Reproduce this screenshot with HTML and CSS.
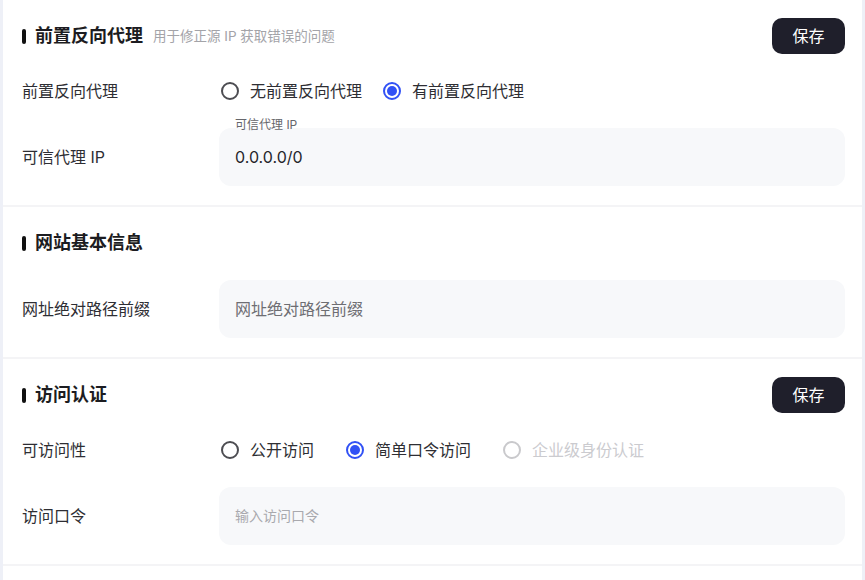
FILE: index.html
```html
<!DOCTYPE html>
<html lang="zh-CN">
<head>
<meta charset="utf-8">
<title>设置</title>
<link rel="stylesheet" href="styles.css">
</head>
<body>
<div class="panel">
  <section class="section">
    <div class="head">
      <div class="title"><span class="mark"></span><h2>前置反向代理</h2><span class="sub">用于修正源 IP 获取错误的问题</span></div>
      <button class="btn">保存</button>
    </div>
    <div class="row">
      <div class="label">前置反向代理</div>
      <div class="radios">
        <label class="opt"><span class="radio"></span>无前置反向代理</label>
        <label class="opt"><span class="radio on"></span>有前置反向代理</label>
      </div>
    </div>
    <div class="row">
      <div class="label">可信代理 IP</div>
      <div class="field">
        <span class="float">可信代理 IP</span>
        <span class="value">0.0.0.0/0</span>
      </div>
    </div>
  </section>
  <section class="section">
    <div class="head">
      <div class="title"><span class="mark"></span><h2>网站基本信息</h2></div>
    </div>
    <div class="row">
      <div class="label">网址绝对路径前缀</div>
      <div class="field"><span class="ph">网址绝对路径前缀</span></div>
    </div>
  </section>
  <section class="section">
    <div class="head">
      <div class="title"><span class="mark"></span><h2>访问认证</h2></div>
      <button class="btn">保存</button>
    </div>
    <div class="row">
      <div class="label">可访问性</div>
      <div class="radios wide">
        <label class="opt"><span class="radio"></span>公开访问</label>
        <label class="opt"><span class="radio on"></span>简单口令访问</label>
        <label class="opt off"><span class="radio"></span>企业级身份认证</label>
      </div>
    </div>
    <div class="row">
      <div class="label">访问口令</div>
      <div class="field"><span class="ph small">输入访问口令</span></div>
    </div>
  </section>
</div>
</body>
</html>
```

FILE: styles.css
```css
html, body {
  margin: 0;
  padding: 0;
}
body {
  background: #eef0f7;
  font-family: Inter, "Noto Sans CJK SC", sans-serif;
  color: #2e2e33;
}
.panel {
  margin: 0 3px;
  background: #fff;
  min-height: 580px;
}
.section {
  display: flex;
  flex-direction: column;
  gap: 19px;
  padding: 18px 17px 19px 19px;
  border-bottom: 2px solid #f4f4f6;
}
.head {
  height: 36px;
  display: flex;
  align-items: center;
  justify-content: space-between;
}
.title {
  display: flex;
  align-items: center;
}
.mark {
  width: 4px;
  height: 15px;
  border-radius: 2px;
  background: #111;
  margin-right: 9px;
}
.title h2 {
  margin: 0;
  font-size: 18px;
  line-height: 24px;
  font-weight: 700;
  color: #1c1c21;
}
.sub {
  margin-left: 10px;
  font-size: 13.5px;
  line-height: 20px;
  color: #a3a3a8;
}
.btn {
  height: 36px;
  width: 73px;
  padding: 0;
  border: none;
  border-radius: 10px;
  background: #1f1f2b;
  color: #fff;
  font-family: inherit;
  font-size: 16px;
  line-height: 36px;
}
.row {
  display: flex;
  align-items: center;
  min-height: 36px;
}
.label {
  width: 197px;
  flex: none;
  font-size: 16px;
  line-height: 22px;
  color: #2e2e33;
}
.radios {
  display: flex;
  align-items: center;
  gap: 19px;
}
.radios.wide {
  gap: 30px;
}
.opt {
  display: flex;
  align-items: center;
  gap: 11px;
  font-size: 16px;
  line-height: 22px;
  color: #2e2e33;
}
.radio {
  margin-left: 2px;
  width: 18px;
  height: 18px;
  box-sizing: border-box;
  border: 2px solid #4d4d52;
  border-radius: 50%;
  display: flex;
  align-items: center;
  justify-content: center;
}
.radio.on {
  border-color: #3151f5;
}
.radio.on::after {
  content: "";
  width: 10px;
  height: 10px;
  border-radius: 50%;
  background: #3151f5;
}
.opt.off {
  color: #cbcbcf;
}
.opt.off .radio {
  border-color: #c9c9cc;
}
.field {
  position: relative;
  flex: 1;
  height: 58px;
  box-sizing: border-box;
  padding: 0 16px;
  background: #f7f8fa;
  border-radius: 12px;
  display: flex;
  align-items: center;
}
.float {
  position: absolute;
  left: 16px;
  top: -12px;
  font-size: 12px;
  line-height: 18px;
  color: #66666b;
}
.value {
  font-size: 16px;
  line-height: 22px;
  color: #26262b;
}
.ph {
  font-size: 16px;
  line-height: 22px;
  color: #6e6e73;
}
.ph.small {
  font-size: 14px;
  color: #a9a9ae;
}
```
